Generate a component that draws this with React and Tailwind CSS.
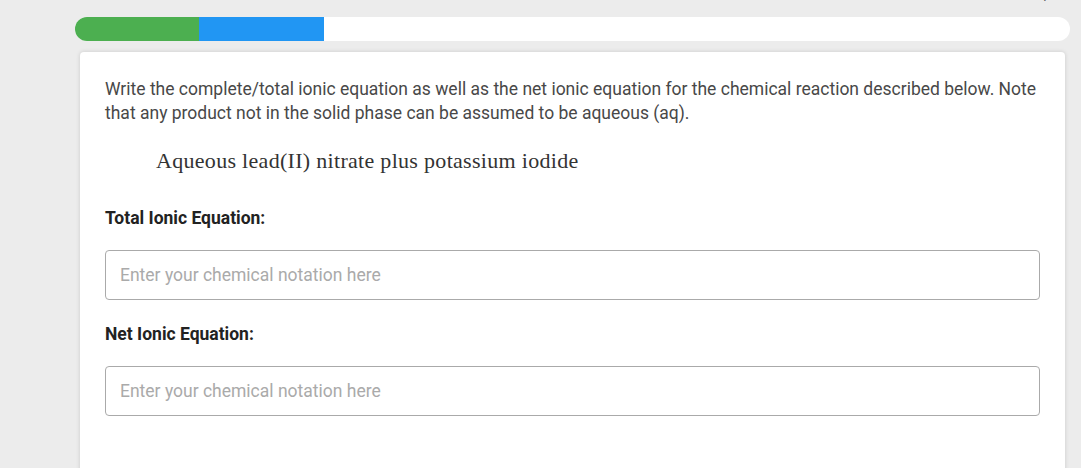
export default function App() {
  const font = { fontFamily: 'Roboto, "Liberation Sans", sans-serif' }
  return (
    <div className="w-[1081px] h-[468px] overflow-hidden bg-[#ececec] text-[#333]" style={font}>
      {/* header text cut off at top */}
      <div className="h-[17px] relative">
        <div className="absolute right-[30px] top-[-15px] text-[14px] leading-[16px] text-[#666] whitespace-nowrap">
          Question 4, 8.2.15-p
        </div>
      </div>

      {/* progress */}
      <div className="ml-[75px] w-[995px] h-[24px] rounded-full bg-white overflow-hidden flex">
        <div className="w-[124px] h-full bg-[#4caf50]" />
        <div className="w-[125px] h-full bg-[#2196f3]" />
      </div>

      {/* card */}
      <div className="ml-[80px] mt-[11px] w-[985px] h-[500px] bg-white rounded-[4px] shadow-[0_0_4px_rgba(0,0,0,0.15)] px-[25px] pt-[25px]">
        <p className="text-[17.5px] leading-[24px] text-[#484848]">
          Write the complete/total ionic equation as well as the net ionic equation for the chemical reaction described below. Note that any product not in the solid phase can be assumed to be aqueous (aq).
        </p>
        <div
          className="mt-[21px] ml-[51px] text-[22px] leading-[30px] tracking-[0.3px] text-[#333]"
          style={{ fontFamily: '"Liberation Serif", "DejaVu Serif", serif' }}
        >
          Aqueous lead(II) nitrate plus potassium iodide
        </div>

        <div className="mt-[30px] text-[17.5px] leading-[24px] font-bold text-[#222]">Total Ionic Equation:</div>
        <input
          className="mt-[20px] block w-[935px] h-[50px] border border-[#aaa] rounded-[4px] px-[14px] text-[17.5px] placeholder:text-[#aaa] outline-none"
          style={font}
          placeholder="Enter your chemical notation here"
        />

        <div className="mt-[22px] text-[17.5px] leading-[24px] font-bold text-[#222]">Net Ionic Equation:</div>
        <input
          className="mt-[20px] block w-[935px] h-[50px] border border-[#aaa] rounded-[4px] px-[14px] text-[17.5px] placeholder:text-[#aaa] outline-none"
          style={font}
          placeholder="Enter your chemical notation here"
        />
      </div>
    </div>
  )
}
